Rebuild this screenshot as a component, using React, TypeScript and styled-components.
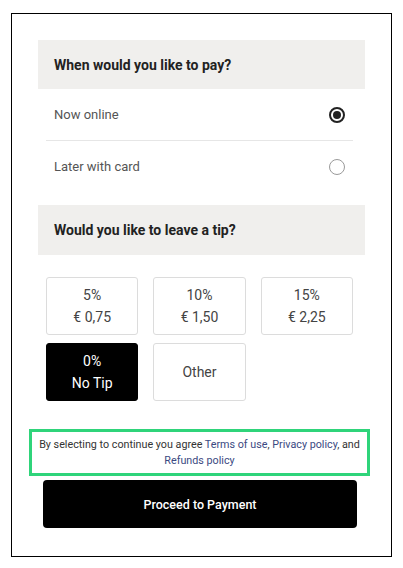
import React, { useState } from 'react';
import styled, { createGlobalStyle } from 'styled-components';

const GlobalStyle = createGlobalStyle`
  body {
    margin: 0;
    background: #fff;
    font-family: Roboto, "Liberation Sans", sans-serif;
  }
`;

const Frame = styled.div`
  margin: 13px 11px 0;
  height: 544px;
  box-sizing: border-box;
  border: 1px solid #000;
  padding: 26px 26px 0;
  display: flex;
  flex-direction: column;
`;

const SectionHeader = styled.div<{ $h: number }>`
  height: ${(p) => p.$h}px;
  background: #f0efed;
  display: flex;
  align-items: center;
  padding-left: 16px;
  font-size: 14px;
  font-weight: 700;
  color: #222;
`;

const OptionList = styled.div`
  margin: 0 12px 13px 8px;
`;

const OptionRow = styled.label<{ $last?: boolean }>`
  height: 51px;
  display: flex;
  align-items: center;
  justify-content: space-between;
  padding: 0 8px;
  font-size: 13px;
  color: #555;
  border-bottom: ${(p) => (p.$last ? 'none' : '1px solid #e6e6e6')};
  cursor: pointer;
`;

const Radio = styled.span<{ $on: boolean }>`
  width: 16px;
  height: 16px;
  box-sizing: border-box;
  border-radius: 50%;
  border: ${(p) => (p.$on ? '2px solid #222' : '1.5px solid #9a9a9a')};
  display: flex;
  align-items: center;
  justify-content: center;
  &::after {
    content: '';
    display: ${(p) => (p.$on ? 'block' : 'none')};
    width: 8px;
    height: 8px;
    border-radius: 50%;
    background: #222;
  }
`;

const TipGrid = styled.div`
  margin: 22px 12px 0 8px;
  display: grid;
  grid-template-columns: repeat(3, 1fr);
  column-gap: 15px;
  row-gap: 8px;
`;

const TipButton = styled.button<{ $on: boolean }>`
  height: 58px;
  border-radius: 3px;
  border: 1px solid ${(p) => (p.$on ? '#000' : '#dcdcdc')};
  background: ${(p) => (p.$on ? '#000' : '#fff')};
  color: ${(p) => (p.$on ? '#fff' : '#444')};
  font-family: Roboto, "Liberation Sans", sans-serif;
  font-size: 14px;
  line-height: 22px;
  padding: 0;
  cursor: pointer;
`;

const Agreement = styled.div`
  margin: 28px -5px 0 -9px;
  height: 47px;
  box-sizing: border-box;
  border: 3px solid #2fd47a;
  display: flex;
  align-items: center;
  justify-content: center;
  text-align: center;
  font-size: 10.75px;
  line-height: 16px;
  color: #333;
  white-space: nowrap;
`;

const Link = styled.a`
  color: #3b4a82;
  text-decoration: none;
`;

const ProceedButton = styled.button`
  margin: 4px 8px 0 5px;
  height: 48px;
  border: none;
  border-radius: 4px;
  background: #000;
  color: #fff;
  font-family: Roboto, "Liberation Sans", sans-serif;
  font-size: 12.5px;
  font-weight: 500;
  cursor: pointer;
`;

const tips = [
  { id: '5', top: '5%', bottom: '€ 0,75' },
  { id: '10', top: '10%', bottom: '€ 1,50' },
  { id: '15', top: '15%', bottom: '€ 2,25' },
  { id: '0', top: '0%', bottom: 'No Tip' },
  { id: 'other', top: 'Other' },
];

const App: React.FC = () => {
  const [pay, setPay] = useState('now');
  const [tip, setTip] = useState('0');
  return (
    <>
      <GlobalStyle />
      <Frame>
        <SectionHeader $h={49}>When would you like to pay?</SectionHeader>
        <OptionList>
          <OptionRow onClick={() => setPay('now')}>
            Now online
            <Radio $on={pay === 'now'} />
          </OptionRow>
          <OptionRow $last onClick={() => setPay('later')}>
            Later with card
            <Radio $on={pay === 'later'} />
          </OptionRow>
        </OptionList>
        <SectionHeader $h={50}>Would you like to leave a tip?</SectionHeader>
        <TipGrid>
          {tips.map((t) => (
            <TipButton key={t.id} $on={tip === t.id} onClick={() => setTip(t.id)}>
              {t.top}
              {t.bottom && (
                <>
                  <br />
                  {t.bottom}
                </>
              )}
            </TipButton>
          ))}
        </TipGrid>
        <Agreement>
          <div>
            By selecting to continue you agree <Link href="#">Terms of use</Link>,{' '}
            <Link href="#">Privacy policy</Link>, and
            <br />
            <Link href="#">Refunds policy</Link>
          </div>
        </Agreement>
        <ProceedButton>Proceed to Payment</ProceedButton>
      </Frame>
    </>
  );
};

export default App;
